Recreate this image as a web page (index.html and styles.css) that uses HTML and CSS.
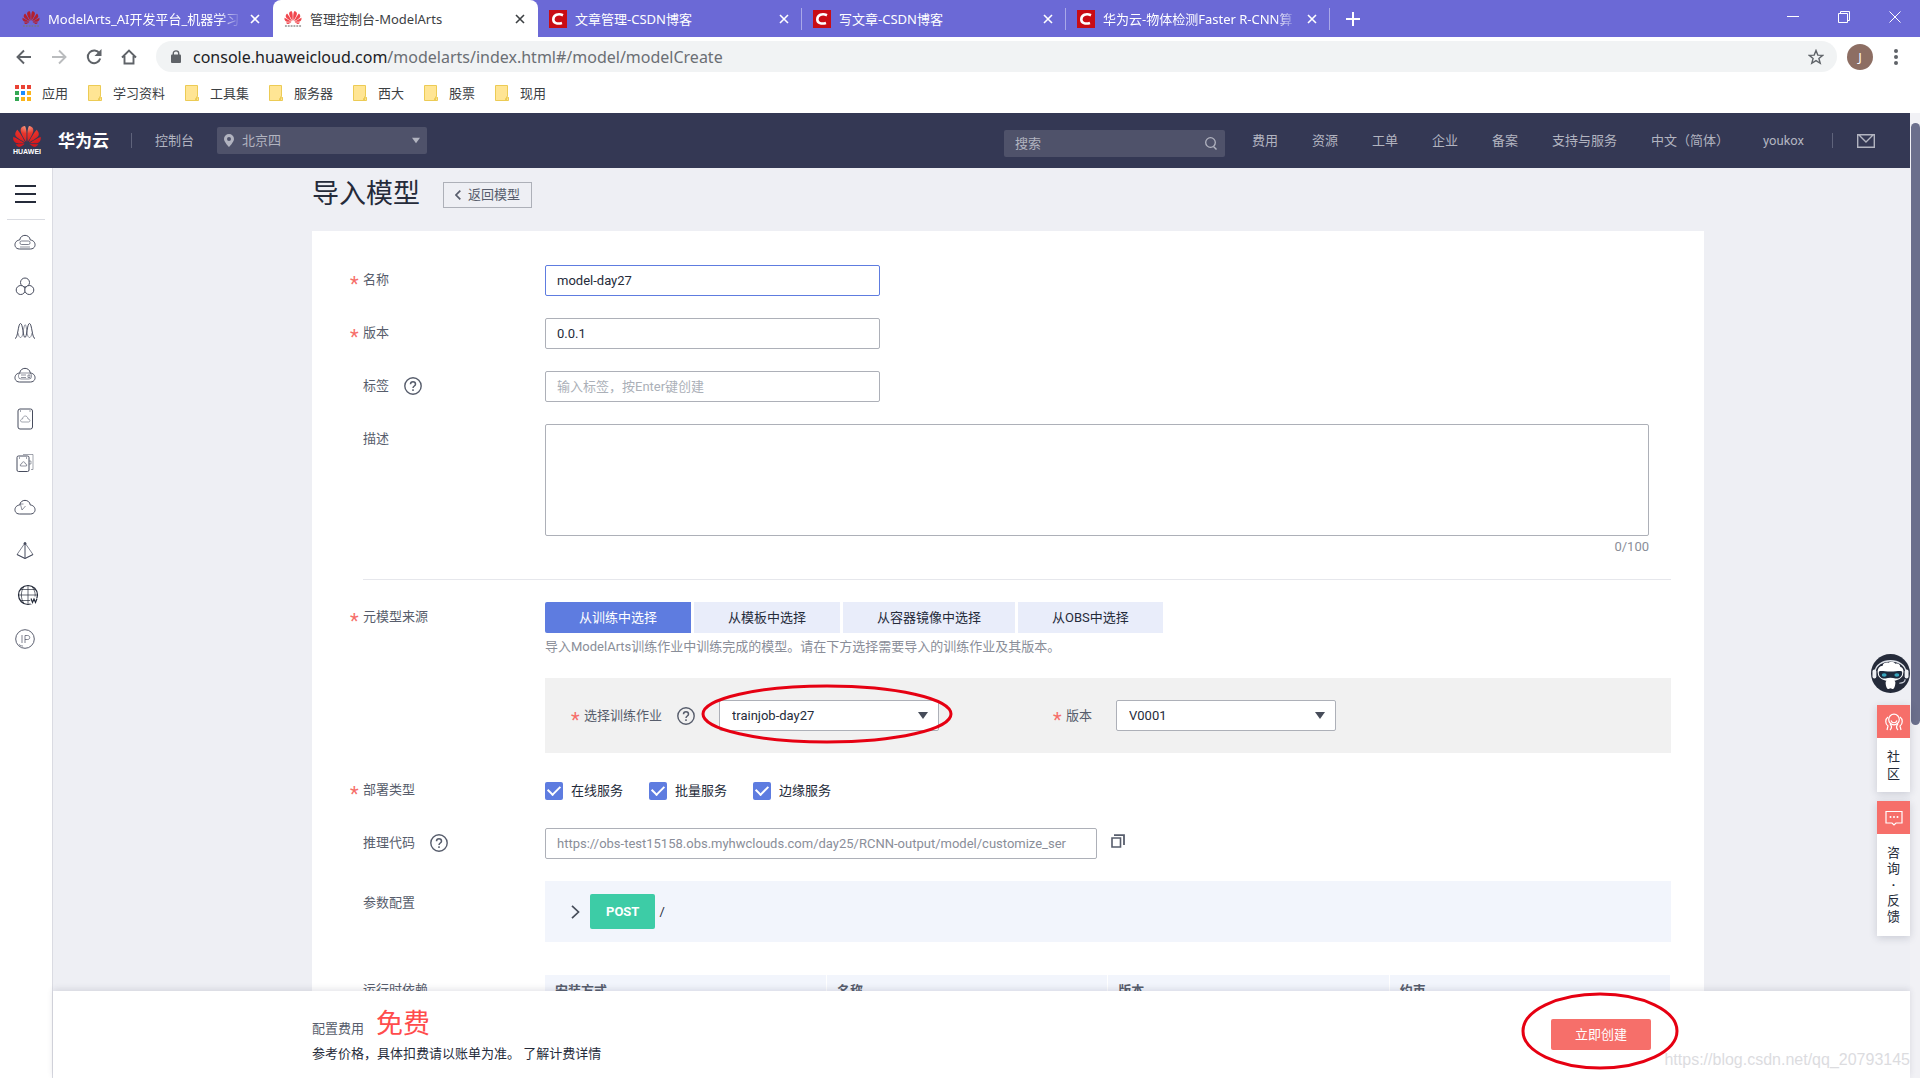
FILE: index.html
```html
<!DOCTYPE html>
<html lang="zh-CN">
<head>
<meta charset="utf-8">
<title>管理控制台-ModelArts</title>
<link rel="stylesheet" href="styles.css">
</head>
<body>
<svg class="defs" aria-hidden="true">
  <defs>
    <radialGradient id="petal" cx="50%" cy="0%" r="90%">
      <stop offset="0" stop-color="#f9a98c"/><stop offset=".4" stop-color="#e8362c"/><stop offset="1" stop-color="#d5161c"/>
    </radialGradient>
    <symbol id="flower" viewBox="0 2 24 20">
      <path d="M3.67 6.14S1.82 7.91 1.72 9.78v.35c.08 1.51 1.22 2.4 1.22 2.4 1.83 1.79 6.26 4.04 7.3 4.55 0 0 .06.03.1-.01l.02-.04v-.04C7.52 10.8 3.67 6.14 3.67 6.14zM9.65 18.6c-.02-.08-.1-.08-.1-.08l-7.38.26c.8 1.43 2.15 2.53 3.56 2.2.96-.25 3.16-1.78 3.88-2.3.06-.05.04-.09.04-.09zm.08-.78C6.49 15.63.21 12.28.21 12.28c-.15.46-.2.9-.21 1.3v.07c0 1.07.4 1.82.4 1.82.8 1.69 2.34 2.2 2.34 2.2.7.3 1.4.31 1.4.31.12.02 4.4 0 5.54 0 .05 0 .08-.05.08-.05v-.06c0-.03-.03-.05-.03-.05zM9.06 3.19a3.42 3.42 0 0 0-2.57 3.15v.41c.03.6.16 1.05.16 1.05.66 2.9 3.86 7.65 4.55 8.65.05.05.1.03.1.03a.1.1 0 0 0 .06-.1c1.06-10.6-1.11-13.42-1.11-13.42-.32.02-1.19.23-1.19.23zm8.3 2.27s-.49-1.8-2.44-2.28c0 0-.57-.14-1.17-.22 0 0-2.18 2.81-1.12 13.43.01.07.06.08.06.08.07.03.1-.03.1-.03.72-1.03 3.9-5.76 4.55-8.64 0 0 .36-1.4.02-2.34zm-2.92 13.07s-.07 0-.09.05c0 0-.01.07.03.1.7.51 2.85 2 3.88 2.3 0 0 .16.05.43.06h.14c.69-.02 1.9-.37 3-2.26l-7.4-.25zm7.83-8.41c.14-2.06-1.94-3.97-1.94-3.98 0 0-3.85 4.66-6.67 10.8 0 0-.03.08.02.13l.04.01h.06c1.06-.53 5.46-2.77 7.28-4.54 0 0 1.15-.93 1.21-2.42zm1.52 2.14s-6.28 3.37-9.52 5.55c0 0-.05.04-.03.11 0 0 .03.06.07.06 1.16 0 5.56 0 5.67-.02 0 0 .57-.02 1.27-.29 0 0 1.56-.5 2.37-2.27 0 0 .73-1.45.17-3.14z"/>
    </symbol>
    <symbol id="fav" viewBox="0 0 19 18">
      <use href="#flower" x="0" y="0" width="19" height="15"/>
      <path d="M1 16.500h17" stroke="#777" stroke-width="1.600" stroke-dasharray="2 1" opacity=".8"/>
    </symbol>
    <symbol id="csdn" viewBox="0 0 18 18">
      <rect width="18" height="18" fill="#c90c14"/>
      <path d="M14 5.200C9 3 4.500 5 4.300 9.200c-.1 4 4.200 5.200 8.700 3.700" fill="none" stroke="#fff" stroke-width="2.600"/>
    </symbol>
    <symbol id="close" viewBox="0 0 10 10"><path d="M1 1l8 8M9 1l-8 8" fill="none" stroke="currentColor" stroke-width="1.600"/></symbol>
    <symbol id="folder" viewBox="0 0 14 16">
      <path d="M.5.5h12v11l1 1v3H.5z" fill="#ffe594" stroke="#eccb55"/><path d="M11.500 11.500v4M10.500 15.500v-2l3-1" fill="none" stroke="#eccb55"/>
    </symbol>
    <symbol id="help" viewBox="0 0 18 18">
      <circle cx="9" cy="9" r="8.200" fill="none" stroke="#575d6c" stroke-width="1.400"/>
      <path d="M6.500 7.200c0-3.200 5-3.200 5 0 0 1.800-2.500 1.900-2.500 3.900M9 12.300v1.600" fill="none" stroke="#575d6c" stroke-width="1.500"/>
    </symbol>
    <symbol id="cloud" viewBox="0 0 22 18">
      <path d="M5.500 16C-.6 16-.6 7.500 5.700 7c.8-6.200 9.800-6.200 10.600 0 6.300.5 6.300 9 .2 9z" fill="none" stroke="currentColor"/>
    </symbol>
    <symbol id="caret" viewBox="0 0 10 7"><path d="M0 0h10L5 7z" fill="currentColor"/></symbol>
  </defs>
</svg>

<div class="tabstrip">
  <div class="tab tab-first">
    <svg class="favicon fav-dark"><use href="#fav"/></svg>
    <span class="tab-title fade">ModelArts_AI开发平台_机器学习</span>
    <button class="tab-close" aria-label="关闭"><svg><use href="#close"/></svg></button>
  </div>
  <div class="tab tab-active">
    <svg class="favicon fav-light"><use href="#fav"/></svg>
    <span class="tab-title">管理控制台-ModelArts</span>
    <button class="tab-close" aria-label="关闭"><svg><use href="#close"/></svg></button>
  </div>
  <div class="tab tab-lined">
    <svg class="favicon"><use href="#csdn"/></svg>
    <span class="tab-title">文章管理-CSDN博客</span>
    <button class="tab-close" aria-label="关闭"><svg><use href="#close"/></svg></button>
  </div>
  <div class="tab tab-lined">
    <svg class="favicon"><use href="#csdn"/></svg>
    <span class="tab-title">写文章-CSDN博客</span>
    <button class="tab-close" aria-label="关闭"><svg><use href="#close"/></svg></button>
  </div>
  <div class="tab tab-lined">
    <svg class="favicon"><use href="#csdn"/></svg>
    <span class="tab-title fade">华为云-物体检测Faster R-CNN算</span>
    <button class="tab-close" aria-label="关闭"><svg><use href="#close"/></svg></button>
  </div>
  <button class="new-tab" aria-label="新标签页"><svg viewBox="0 0 14 14"><path d="M7 0v14M0 7h14" stroke="#fff" stroke-width="2"/></svg></button>
  <div class="window-buttons">
    <button aria-label="最小化"><svg viewBox="0 0 12 12"><path d="M0 5.500h12" stroke="#fff"/></svg></button>
    <button aria-label="还原"><svg viewBox="0 0 12 12"><path d="M.5 2.500h9v9h-9zM2.500 2V.5h9v9H10" fill="none" stroke="#fff"/></svg></button>
    <button aria-label="关闭窗口"><svg viewBox="0 0 12 12"><path d="M.5.5l11 11M11.500.5l-11 11" stroke="#fff"/></svg></button>
  </div>
</div>

<div class="toolbar">
  <button class="tool" aria-label="后退"><svg viewBox="0 0 16 16"><path d="M15 8H2M8 1.500L1.500 8 8 14.500" fill="none" stroke="#5f6368" stroke-width="1.900"/></svg></button>
  <button class="tool" aria-label="前进"><svg viewBox="0 0 16 16"><path d="M1 8h13M8 1.500L14.500 8 8 14.500" fill="none" stroke="#babcbe" stroke-width="1.900"/></svg></button>
  <button class="tool" aria-label="刷新"><svg viewBox="0 0 16 16"><path d="M13.500 4.500A6.300 6.300 0 1 0 14.200 9.500" fill="none" stroke="#5f6368" stroke-width="2"/><path d="M15.500 0v7h-7z" fill="#5f6368"/></svg></button>
  <button class="tool" aria-label="主页"><svg viewBox="0 0 16 16"><path d="M1 8.500L8 1.500l7 7M3.500 7v7.500h9V7" fill="none" stroke="#5f6368" stroke-width="1.900"/></svg></button>
  <div class="omnibox">
    <svg class="lock" viewBox="0 0 10 13"><rect y="4.500" width="10" height="8.500" rx="1" fill="#5f6368"/><path d="M2.300 5V3.300c0-3.200 5.400-3.200 5.400 0V5" fill="none" stroke="#5f6368" stroke-width="1.400"/></svg>
    <span class="url"><b>console.huaweicloud.com</b>/modelarts/index.html#/model/modelCreate</span>
    <svg class="star" viewBox="0 0 16 16"><path d="M8 1.500l1.800 4.600 4.900.3-3.800 3.100 1.300 4.800L8 11.600l-4.200 2.700 1.300-4.800L1.300 6.400l4.900-.3z" fill="none" stroke="#5f6368" stroke-width="1.400"/></svg>
  </div>
  <span class="avatar">J</span>
  <button class="dots" aria-label="菜单"><svg viewBox="0 0 4 16"><g fill="#5f6368"><circle cx="2" cy="2" r="2"/><circle cx="2" cy="8" r="2"/><circle cx="2" cy="14" r="2"/></g></svg></button>
</div>

<nav class="bookmarks" aria-label="书签">
  <a href="#"><svg class="apps" viewBox="0 0 16 16"><g fill="#ea4335"><path d="M0 0h4v4H0zM6 0h4v4H6zM12 0h4v4h-4z"/></g><path d="M0 6h4v4H0zM0 12h4v4H0z" fill="#34a853"/><path d="M6 6h4v4H6z" fill="#1a8cff"/><path d="M12 6h4v4h-4zM6 12h4v4H6zM12 12h4v4h-4z" fill="#fbb41a"/></svg>应用</a>
  <a href="#"><svg class="folder"><use href="#folder"/></svg>学习资料</a>
  <a href="#"><svg class="folder"><use href="#folder"/></svg>工具集</a>
  <a href="#"><svg class="folder"><use href="#folder"/></svg>服务器</a>
  <a href="#"><svg class="folder"><use href="#folder"/></svg>西大</a>
  <a href="#"><svg class="folder"><use href="#folder"/></svg>股票</a>
  <a href="#"><svg class="folder"><use href="#folder"/></svg>现用</a>
</nav>

<div class="viewport">
  <div class="console">
    <header class="topbar">
      <a class="logo" href="#"><svg><use href="#flower"/></svg><span>HUAWEI</span></a>
      <a class="brand" href="#">华为云</a>
      <i class="bar"></i>
      <a class="console-link" href="#">控制台</a>
      <div class="region">
        <svg class="pin" viewBox="0 0 10 13"><path d="M5 0a5 5 0 0 0-5 5c0 3 5 8 5 8s5-5 5-8a5 5 0 0 0-5-5zm0 3a2 2 0 1 1 0 4 2 2 0 0 1 0-4z" fill="#b2b4c0" fill-rule="evenodd"/></svg>
        <select aria-label="区域"><option>北京四</option></select>
        <svg class="caret"><use href="#caret"/></svg>
      </div>
      <div class="search">
        <input type="text" placeholder="搜索" aria-label="搜索">
        <svg viewBox="0 0 12 13"><circle cx="5.500" cy="5.500" r="4.800" fill="none" stroke="#b2b4c0" stroke-width="1.300"/><path d="M8.500 9.500L11.500 12.500" stroke="#b2b4c0" stroke-width="1.400"/></svg>
      </div>
      <nav class="links">
        <a href="#">费用</a><a href="#">资源</a><a href="#">工单</a><a href="#">企业</a><a href="#">备案</a><a href="#">支持与服务</a><a href="#">中文（简体）</a><a href="#">youkox</a>
      </nav>
      <i class="bar"></i>
      <a class="mail" href="#" aria-label="消息"><svg viewBox="0 0 18 14"><path d="M.7.7h16.600v12.600H.7zM2 1l7 7 7-7" fill="none" stroke="#b2b4c0" stroke-width="1.400"/></svg></a>
    </header>

    <div class="workspace">
      <aside class="rail">
        <button class="burger" aria-label="展开菜单"><i></i><i></i><i></i></button>
        <a href="#" aria-label="弹性云服务器"><svg viewBox="0 0 22 22"><use href="#cloud" x="0" y="1" width="22" height="18"/><rect x="6" y="9" width="10" height="3.500" rx="1.500" stroke-width=".7"/><path d="M6 15h10" stroke-width=".6"/></svg></a>
        <a href="#" aria-label="伸缩"><svg viewBox="0 0 22 22"><circle cx="11" cy="6.500" r="4.500"/><circle cx="6.700" cy="14" r="4.500" fill="#fff"/><circle cx="15.300" cy="14" r="4.500" fill="#fff"/></svg></a>
        <a href="#" aria-label="基因"><svg viewBox="0 0 22 22"><path d="M1 18.500c3 0 3-15 5.500-15s2.500 14 4.500 14 2-14 4.500-14 2.500 15 5.500 15"/><path d="M4 13c1 6 4 6 5 0 1.500-11 3-11 4 0 1 6 4 6 5 0" stroke-width=".6"/></svg></a>
        <a href="#" aria-label="裸金属"><svg viewBox="0 0 22 22"><use href="#cloud" x="0" y="2" width="22" height="18"/><rect x="4.500" y="9" width="13" height="6" rx="2.500" stroke-width=".6"/><path d="M7 11h5M7 13.500h5M14 11h2v2.500h-2z" stroke-width=".6"/></svg></a>
        <a href="#" aria-label="云硬盘"><svg viewBox="0 0 22 22"><rect x="4" y="1" width="14.500" height="20" rx="2"/><path d="M6 3h1M15.500 3h1"/><path d="M8 14c-2 0-2-3 .5-3 .5-4 5-4 5.500 0 2.500 0 2.500 3 .5 3z" stroke-width=".5"/></svg></a>
        <a href="#" aria-label="云备份"><svg viewBox="0 0 22 22"><rect x="3" y="4" width="12" height="15.500" rx="1.500"/><path d="M5 6h1M12 6h1"/><path d="M6.500 14c-1-2 1-2 1-2 1-3 3-3 4 0 0 0 2 0 1 2z" stroke-width=".6"/><path d="M9 2.500h10v15h-2M15 9h2v3h-2" stroke-width=".5"/></svg></a>
        <a href="#" aria-label="云空间"><svg viewBox="0 0 22 22"><use href="#cloud" x="0" y="2" width="22" height="18"/><path d="M6.500 8.500L8 14l3.500-4M6 8h3.500" stroke-width=".6"/></svg></a>
        <a href="#" aria-label="网络"><svg viewBox="0 0 22 22"><path d="M11 3L3 14.500l8 4 8-4z" stroke-width=".7"/><path d="M11 3v15M3 14.500l8 4 8-4"/><circle cx="11" cy="3.500" r="1" fill="currentColor"/></svg></a>
        <a href="#" class="www" aria-label="域名"><svg viewBox="0 0 22 22"><circle cx="11" cy="11" r="9.500" stroke-width="1.200"/><path d="M1.500 11h19M11 1.500v19M3.500 5.500h15M3.500 16.500h10M7 2.500c-3.500 5-3.500 12 0 17M15 2.500c3 4 3.500 8 3 10" stroke-width=".7"/><rect x="13.500" y="14" width="8" height="6" fill="#fff" stroke="none"/><path d="M14 14.500l1.500 4 1.500-3.500 1.500 3.500 1.500-4" stroke-width="1.200"/></svg></a>
        <a href="#" aria-label="弹性IP"><svg viewBox="0 0 22 22"><circle cx="11" cy="11" r="9.300" stroke-width=".9"/><path d="M8 7v8M11 15V7.500h2.500c3 0 3 4 0 4H11M5 16.500c2 1.500 3 1.500 4 1.500" stroke-width=".7"/></svg></a>
      </aside>

      <div class="content">
        <main class="page">
          <div class="heading">
            <h1>导入模型</h1>
            <button class="back"><svg viewBox="0 0 6 10"><path d="M5.300.7L1 5l4.300 4.300" fill="none" stroke="#575d6c" stroke-width="1.700"/></svg>返回模型</button>
          </div>
          <form class="card">
            <div class="row">
              <label class="label required" for="name"><span>名称</span></label>
              <input class="text short active" id="name" type="text" value="model-day27">
            </div>
            <div class="row">
              <label class="label required" for="ver"><span>版本</span></label>
              <input class="text short" id="ver" type="text" value="0.0.1">
            </div>
            <div class="row">
              <label class="label" for="tag"><span>标签</span><svg class="help"><use href="#help"/></svg></label>
              <input class="text short" id="tag" type="text" placeholder="输入标签，按Enter键创建">
            </div>
            <div class="row">
              <label class="label" for="desc"><span>描述</span></label>
              <div class="desc"><textarea id="desc"></textarea><span class="count">0/100</span></div>
            </div>
            <hr class="rule">
            <div class="row">
              <div class="label required"><span>元模型来源</span></div>
              <div class="source">
                <div class="segments">
                  <button type="button" class="on">从训练中选择</button><button type="button">从模板中选择</button><button type="button">从容器镜像中选择</button><button type="button">从OBS中选择</button>
                </div>
                <p class="hint">导入ModelArts训练作业中训练完成的模型。请在下方选择需要导入的训练作业及其版本。</p>
                <div class="panel">
                  <div class="pick">
                    <label class="star-label" for="job">选择训练作业</label>
                    <svg class="help"><use href="#help"/></svg>
                    <div class="drop">
                      <select id="job"><option>trainjob-day27</option></select>
                      <svg class="caret"><use href="#caret"/></svg>
                      <svg class="ring ring-job" viewBox="0 0 252 60" preserveAspectRatio="none"><ellipse cx="126" cy="30" rx="124" ry="28"/></svg>
                    </div>
                  </div>
                  <div class="pick">
                    <label class="star-label" for="jobver">版本</label>
                    <div class="drop">
                      <select id="jobver"><option>V0001</option></select>
                      <svg class="caret"><use href="#caret"/></svg>
                    </div>
                  </div>
                </div>
              </div>
            </div>
            <div class="row">
              <div class="label required"><span>部署类型</span></div>
              <div class="checks">
                <label><input type="checkbox" checked>在线服务</label>
                <label><input type="checkbox" checked>批量服务</label>
                <label><input type="checkbox" checked>边缘服务</label>
              </div>
            </div>
            <div class="row">
              <label class="label" for="code"><span>推理代码</span><svg class="help"><use href="#help"/></svg></label>
              <div class="code">
                <input class="text muted" id="code" type="text" readonly value="https://obs-test15158.obs.myhwclouds.com/day25/RCNN-output/model/customize_ser">
                <button type="button" class="copy" aria-label="复制"><svg viewBox="0 0 14 14"><path d="M1 4h8.500v9H1z" fill="none" stroke="#575d6c" stroke-width="1.600"/><path d="M3 1.200h10V11" fill="none" stroke="#575d6c" stroke-width="1.800"/></svg></button>
              </div>
            </div>
            <div class="row row-params">
              <div class="label"><span>参数配置</span></div>
              <div class="params">
                <button type="button" class="expand" aria-label="展开"><svg viewBox="0 0 9 14"><path d="M1 .8L7.500 7 1 13.200" fill="none" stroke="#464c59" stroke-width="1.700"/></svg></button>
                <span class="post">POST</span><span>/</span>
              </div>
            </div>
            <div class="row row-deps">
              <div class="label"><span>运行时依赖</span></div>
              <table class="deps">
                <thead><tr><th>安装方式</th><th>名称</th><th>版本</th><th>约束</th></tr></thead>
              </table>
            </div>
          </form>
        </main>

        <footer class="buybar">
          <div>
            <p class="fee"><span>配置费用</span><strong>免费</strong></p>
            <p class="note">参考价格，具体扣费请以账单为准。 <a href="#">了解计费详情</a></p>
          </div>
          <div class="submit">
            <button type="button">立即创建</button>
            <svg class="ring ring-submit" viewBox="0 0 158 78" preserveAspectRatio="none"><ellipse cx="79" cy="39" rx="77" ry="37"/></svg>
          </div>
          <span class="watermark">https://blog.csdn.net/qq_20793145</span>
        </footer>
      </div>

      <div class="floaters">
        <svg class="robot" viewBox="0 0 40 40">
          <circle cx="20" cy="20" r="20" fill="#252b3a"/>
          <path d="M4 19C5 3 35 3 36 19" fill="none" stroke="#dfe3ea" stroke-width="1.500"/>
          <rect x="1.500" y="16" width="4" height="9" rx="2" fill="#eef0f4"/><rect x="34.500" y="16" width="4" height="9" rx="2" fill="#eef0f4"/>
          <path d="M7 20c-1-5 2-8 5-8 0-3 4-4 6-3 2-2 6-1 7 1 3-1 5 1 5 3 3 1 4 4 3 7 0 5-7 8-13 8s-13-3-13-8z" fill="#fff"/>
          <path d="M8 19c0-3 5-1 12-1s12-2 12 1c0 5-4 7-7 6s-7-1-10 0-7-1-7-6z" fill="#1e2a3c"/>
          <ellipse cx="13.500" cy="21.500" rx="2.500" ry="1.800" fill="#3aa5bd"/><ellipse cx="26.500" cy="21.500" rx="2.500" ry="1.800" fill="#3aa5bd"/>
          <path d="M15 29c0-3 10-3 10 0 0 3-1 7-3 7l-2-1-2 1c-2 0-3-4-3-7z" fill="#fff"/>
          <path d="M35 26c0 3-3 4-6 4" fill="none" stroke="#cfd4de" stroke-width="1.200"/>
        </svg>
        <a class="float" href="#">
          <span class="float-icon"><svg viewBox="0 0 18 18"><g fill="none" stroke="#fff" stroke-width="1.200"><circle cx="9" cy="6.500" r="5.300"/><path d="M6 7.500c1 3 5 3 6 0M3 4C0 6 0 11 3 13l-1 4M15 4c3 2 3 7 0 9l1 4M5 17c2-2 2-4 0-6M13 17c-2-2-2-4 0-6"/></g></svg></span>
          <span class="float-text">社<br>区</span>
        </a>
        <a class="float tall" href="#">
          <span class="float-icon"><svg viewBox="0 0 18 18"><path d="M1 2.500h16v11.500h-6l-2 2-2-2H1z" fill="none" stroke="#fff" stroke-width="1.200"/><g fill="#fff"><circle cx="5.500" cy="8" r="1"/><circle cx="9" cy="8" r="1"/><circle cx="12.500" cy="8" r="1"/></g></svg></span>
          <span class="float-text">咨<br>询<br><b>·</b><br>反<br>馈</span>
        </a>
      </div>
    </div>
  </div>
  <div class="scrollbar"><i></i></div>
</div>
</body>
</html>
```
FILE: styles.css
```css
* { box-sizing: border-box; }

body {
  margin: 0;
  height: 100vh;
  display: flex;
  flex-direction: column;
  overflow: hidden;
  background: #fff;
  color: #252b3a;
  font: 13px/20px Roboto, "Noto Sans CJK SC", sans-serif;
}

a { color: inherit; text-decoration: none; }
p, h1 { margin: 0; font-weight: 400; }
svg { display: block; flex: none; }
button, input, select, textarea { font: inherit; color: inherit; margin: 0; }
button { padding: 0; border: 0; background: none; }
.defs { position: absolute; width: 0; height: 0; }

/* Browser frame */
.tabstrip, .toolbar, .bookmarks {
  flex: none;
  display: flex;
  align-items: center;
  font-family: "Noto Sans", "Noto Sans CJK SC", sans-serif;
}
.tabstrip { height: 37px; background: #6b69d6; color: #fff; }
.tab {
  width: 264px;
  height: 37px;
  display: flex;
  align-items: center;
  gap: 8px;
  padding: 0 13px 0 11px;
}
.tab-first { width: 273px; padding-left: 22px; }
.tab-active {
  width: 265px;
  background: #fff;
  color: #3c4043;
  border-radius: 8px 8px 0 0;
}
.tab-lined { background: linear-gradient(#a9a8e8, #a9a8e8) right center / 1px 22px no-repeat; }
.favicon { width: 18px; height: 18px; }
.fav-dark { fill: #b3202f; }
.fav-light { fill: #f0474d; }
.tab-title { flex: 1; overflow: hidden; white-space: nowrap; }
.fade { -webkit-mask-image: linear-gradient(to right, #000 88%, transparent); mask-image: linear-gradient(to right, #000 88%, transparent); }
.tab-close svg { width: 10px; height: 10px; }
.new-tab { margin-left: 16px; }
.new-tab svg { width: 14px; height: 14px; }
.window-buttons { display: flex; margin: 0 19px 4px auto; gap: 39px; }
.window-buttons svg { width: 12px; height: 12px; }

.toolbar { height: 41px; padding: 0 22px 2px 16px; background: #fff; }
.tool { margin-right: 19px; }
.tool svg { width: 16px; height: 16px; }
.omnibox {
  flex: 1;
  height: 31px;
  margin-right: 10px;
  padding: 0 13px 0 15px;
  display: flex;
  align-items: center;
  border-radius: 16px;
  background: #f1f3f4;
}
.lock { width: 10px; height: 13px; margin-right: 12px; }
.url { flex: 1; font-size: 16px; color: #6b6f74; }
.url b { font-weight: 400; color: #202124; }
.star { width: 16px; height: 16px; }
.avatar {
  width: 26px;
  height: 26px;
  border-radius: 50%;
  background: #8d6e63;
  color: #fff;
  text-align: center;
  line-height: 26px;
}
.dots { margin-left: 21px; }
.dots svg { width: 4px; height: 16px; }

.bookmarks { height: 35px; padding: 0 15px 5px; gap: 20px; color: #3c4043; }
.bookmarks a { display: flex; align-items: center; gap: 11px; }
.apps { width: 16px; height: 16px; }
.folder { width: 14px; height: 16px; }

/* Console frame */
.viewport { flex: 1; min-height: 0; display: flex; }
.console { flex: 1; min-width: 0; display: flex; flex-direction: column; }
.scrollbar { width: 10px; padding: 10px 0 0 1px; background: #f1f1f5; }
.scrollbar i { display: block; height: 63%; border-radius: 5px; background: #6b6f8c; }

.topbar {
  flex: none;
  height: 55px;
  display: flex;
  align-items: center;
  padding: 0 35px 0 12px;
  background: #343854;
  color: #b2b4c0;
}
.logo { width: 30px; text-align: center; color: #fff; font: bold 7px/8px "Liberation Sans", sans-serif; }
.logo svg { width: 30px; height: 23px; fill: url(#petal); }
.brand { margin-left: 16px; font-size: 17px; font-weight: 700; color: #fff; }
.bar { width: 1px; height: 15px; background: #5f637b; }
.brand + .bar { margin-left: 22px; }
.console-link { margin: 0 23px; }
.region, .search {
  height: 27px;
  display: flex;
  align-items: center;
  background: #4f526a;
  border-radius: 2px;
}
.region { width: 210px; padding: 0 7px; gap: 8px; }
.region select { flex: 1; appearance: none; border: 0; padding: 0; background: none; color: #b2b4c0; }
.pin { width: 10px; height: 13px; }
.caret { width: 10px; height: 7px; }
.region .caret { width: 8px; }
.search { width: 221px; margin: 6px 27px 0 auto; padding: 0 8px 0 11px; }
.search input { flex: 1; min-width: 0; border: 0; padding: 0; background: none; }
.search input::placeholder { color: #b2b4c0; }
.search svg { width: 12px; height: 13px; }
.links { display: flex; gap: 34px; }
.links + .bar { margin: 0 24px 0 28px; }
.mail svg { width: 18px; height: 14px; }

.workspace { flex: 1; min-height: 0; display: flex; position: relative; background: #eeeff4; }
.rail {
  width: 53px;
  flex: none;
  padding-top: 17px;
  background: #fff;
  border-right: 1px solid #dadbe2;
}
.burger {
  display: flex;
  flex-direction: column;
  gap: 6px;
  width: 38px;
  height: 35px;
  margin: 0 7px 12px;
  padding-left: 8px;
  border-bottom: 1px solid #d9dbe1;
}
.burger i { width: 21px; height: 2px; background: #252b3a; }
.rail a { display: block; height: 44px; padding-left: 14px; color: #474c5e; }
.rail svg { width: 22px; height: 22px; fill: none; stroke: currentColor; }
.rail .www { padding-left: 17px; color: #252b3a; }

.content { flex: 1; min-width: 0; display: flex; flex-direction: column; }
.page { flex: 1; min-height: 0; overflow: hidden; padding: 6px 206px 0 259px; }
.heading { display: flex; align-items: center; gap: 23px; height: 40px; }
.heading h1 { font-size: 27px; line-height: 40px; }
.back {
  display: flex;
  align-items: center;
  gap: 7px;
  height: 26px;
  padding: 0 11px;
  margin-top: 1px;
  border: 1px solid #adb0b8;
  color: #575d6c;
}
.back svg { width: 6px; height: 10px; }

/* Form */
.card { margin-top: 17px; padding: 34px 33px 60px 0; background: #fff; display: flex; flex-direction: column; gap: 22px; }
.row { display: grid; grid-template-columns: 233px minmax(0, 1fr); min-height: 31px; }
.label { display: flex; align-items: center; height: 29px; padding-left: 51px; color: #575d6c; }
.required { padding-left: 38px; }
.required::before, .star-label::before {
  content: "*";
  width: 13px;
  color: #f66f6a;
  font: 20px/28px Roboto, sans-serif;
  height: 20px;
}
.help { width: 18px; height: 18px; }
.label .help { margin-left: 15px; }
.text, .desc textarea, .drop select {
  border: 1px solid #adb0b8;
  border-radius: 2px;
  background: #fff;
}
.text { height: 31px; padding: 0 11px; }
.text::placeholder { color: #abb0b8; }
.short { width: 335px; }
.active { border-color: #5e7ce0; outline: 0; }
.desc { display: flex; flex-direction: column; margin-right: 22px; }
.desc textarea { height: 112px; resize: none; }
.count { align-self: flex-end; line-height: 21px; color: #8a8e99; }
.rule { width: auto; margin: 0 0 0 51px; border: 0; border-top: 1px solid #e6e7ec; }
.segments { display: flex; gap: 3px; }
.segments button { height: 31px; padding: 0 34px; background: #e9edfa; }
.segments .on { background: #5e7ce0; color: #fff; border-radius: 2px 0 0 2px; }
.hint { padding-top: 4px; color: #8a8e99; }
.panel { display: flex; align-items: center; gap: 114px; height: 75px; margin-top: 21px; padding-left: 26px; background: #f1f1f1; }
.pick { display: flex; align-items: center; }
.star-label { display: flex; align-items: center; color: #575d6c; }
.pick .help { margin-left: 15px; }
.drop { display: flex; align-items: center; position: relative; margin-left: 24px; width: 220px; }
.drop select { appearance: none; width: 100%; height: 31px; padding: 0 12px; }
.drop .caret { position: absolute; right: 11px; color: #464c59; }
.ring { position: absolute; fill: none; stroke: #e60012; stroke-width: 3px; pointer-events: none; }
.ring-job { width: 252px; height: 60px; left: -18px; top: -16px; }
.checks { display: flex; align-items: center; gap: 26px; }
.checks label { display: flex; align-items: center; gap: 8px; }
.checks input {
  appearance: none;
  display: grid;
  place-items: center;
  width: 18px;
  height: 18px;
  border-radius: 2px;
  background: #5e7ce0;
}
.checks input::before {
  content: "";
  width: 10px;
  height: 6px;
  margin-bottom: 3px;
  border: solid #fff;
  border-width: 0 0 2px 2px;
  transform: rotate(-45deg);
}
.code { display: flex; align-items: flex-start; gap: 14px; }
.code .text { width: 552px; }
.muted { color: #8a8e99; }
.copy { margin-top: 6px; }
.copy svg { width: 14px; height: 14px; }
.row-params .label { margin-top: 7px; }
.params { display: flex; align-items: center; height: 61px; padding-left: 26px; background: #f2f5fc; }
.expand svg { width: 9px; height: 14px; }
.post {
  height: 35px;
  margin: 0 4px 0 10px;
  padding: 0 16px;
  border-radius: 2px;
  background: #3dcca6;
  color: #fff;
  font-weight: 700;
  line-height: 35px;
}
.row-deps { margin-top: 11px; }
.deps { width: 100%; table-layout: fixed; border-collapse: collapse; }
.deps th { height: 31px; padding: 0 10px; text-align: left; font-weight: 700; color: #575d6c; background: #f2f5fc; border-right: 1px solid #fff; }

.buybar {
  flex: none;
  position: relative;
  display: flex;
  align-items: center;
  justify-content: space-between;
  height: 87px;
  padding: 0 259px;
  background: #fff;
  box-shadow: 0 -2px 6px rgba(40, 45, 70, .12);
}
.fee { display: flex; align-items: baseline; gap: 12px; color: #575d6c; }
.fee strong { font-size: 27px; line-height: 36px; font-weight: 400; color: #ff4c4c; }
.note { padding-top: 2px; }
.submit { position: relative; }
.submit button { width: 100px; height: 31px; border-radius: 2px; background: #f66f6a; color: #fff; }
.ring-submit { width: 158px; height: 78px; left: -30px; top: -27px; }
.watermark { position: absolute; right: 0; bottom: 8px; color: #dcdcdf; font: 16px/20px "Liberation Sans", sans-serif; }

/* Help widgets over the page */
.floaters { position: absolute; right: 0; top: 486px; display: flex; flex-direction: column; align-items: flex-end; }
.robot { width: 39px; height: 39px; margin-bottom: 12px; }
.float { width: 33px; margin-bottom: 9px; background: #fff; box-shadow: 0 2px 8px rgba(40, 45, 70, .18); text-align: center; }
.float-icon { display: grid; place-items: center; height: 33px; background: #f66f6a; }
.float-icon svg { width: 18px; height: 18px; }
.float-text { display: block; padding: 10px 0; line-height: 17px; }
.tall .float-text { line-height: 16px; padding: 11px 0; }
```
